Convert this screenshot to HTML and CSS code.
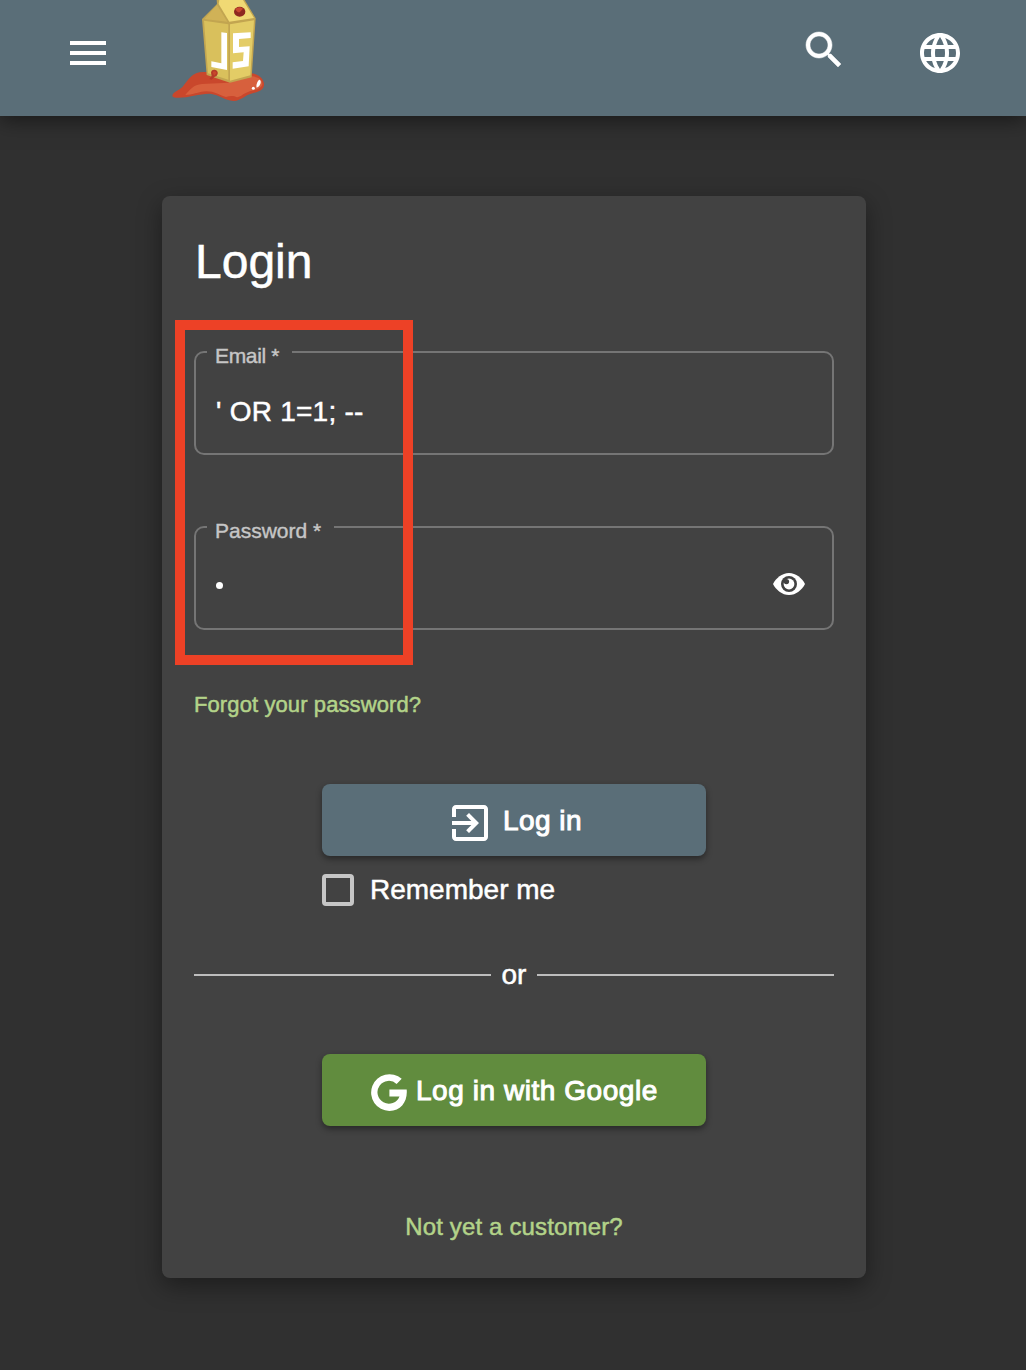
FILE: index.html
```html
<!DOCTYPE html>
<html lang="en">
<head>
<meta charset="utf-8">
<title>Login</title>
<link rel="stylesheet" href="styles.css">
</head>
<body>
<header class="toolbar">
  <svg class="icon menu" viewBox="0 0 24 24"><path d="M3 18h18v-2H3v2zm0-5h18v-2H3v2zm0-7v2h18V6H3z"/></svg>
  <svg class="logo" viewBox="0 0 360 360">
    <path fill="#c9472c" d="M37 287C38 275 57 272 68 260C85 239 96 216 130 216L270 219C298 221 313 238 312 254C311 272 291 276 273 281C256 285 245 301 221 303C192 300 180 285 151 281C119 280 84 294 53 293C43 293 37 291 37 287Z"/>
    <path fill="#d7603d" d="M76 285C91 267 100 255 126 252L205 248L276 229C298 232 308 240 307 254C302 269 278 270 264 276C249 281 242 291 231 292C222 287 210 287 198 291C172 284 166 274 139 274C113 276 97 285 76 285Z"/>
    <path fill="#c2a550" d="M170 0L171 12L126 57L140 225L210 248L275 232L287 55L254 0Z"/>
    <path fill="#d9c05c" d="M132 62L205 73L205 239L144 220Z"/>
    <path fill="#e3cc66" d="M210 73L282 61L271 226L210 242Z"/>
    <path fill="#f0d974" d="M178 0H249L282 54L208 65L176 12Z"/>
    <path fill="#d0b257" d="M171 15L202 65L133 57Z"/>
    <path fill="#fff" d="M184 97L201 99V210L154 201V184L184 190ZM219 100L272 97V114L237 117V141L269 139L266 199L218 206V187L249 183L251 157L219 160Z"/>
    <ellipse cx="239" cy="35" rx="17" ry="15" fill="#8e2820"/>
    <path fill="#c74730" d="M226 27Q237 17 249 26L239 37Q231 38 226 27Z"/>
    <path fill="#b43a28" d="M153 218Q154 208 164 209Q175 211 173 222Q171 229 163 231L155 239L148 237L155 228Z"/>
    <path fill="#c9472c" d="M158 216Q165 210 170 219L162 227Z"/>
    <path fill="#fff" d="M290 263C287 255 293 240 299 239C306 243 301 259 290 263Z"/>
    <circle cx="280" cy="265" r="4.5" fill="#fff"/>
  </svg>
  <svg class="icon search" viewBox="0 0 24 24"><path d="M15.5 14h-.79l-.28-.27C15.41 12.59 16 11.11 16 9.5 16 5.91 13.09 3 9.5 3S3 5.91 3 9.5 5.91 16 9.5 16c1.61 0 3.09-.59 4.23-1.57l.27.28v.79l5 4.99L20.49 19l-4.99-5zm-6 0C7.01 14 5 11.99 5 9.5S7.01 5 9.5 5 14 7.01 14 9.5 11.99 14 9.5 14z"/></svg>
  <svg class="icon language" viewBox="0 0 24 24"><path d="M11.99 2C6.47 2 2 6.48 2 12s4.47 10 9.99 10C17.52 22 22 17.52 22 12S17.52 2 11.99 2zm6.93 6h-2.95c-.32-1.25-.78-2.45-1.38-3.56 1.84.63 3.37 1.91 4.33 3.56zM12 4.04c.83 1.2 1.48 2.53 1.91 3.96h-3.82c.43-1.43 1.08-2.76 1.91-3.96zM4.26 14C4.1 13.36 4 12.69 4 12s.1-1.36.26-2h3.38c-.08.66-.14 1.32-.14 2s.06 1.34.14 2H4.26zm.82 2h2.95c.32 1.25.78 2.45 1.38 3.56-1.84-.63-3.37-1.9-4.33-3.56zm2.95-8H5.08c.96-1.66 2.49-2.93 4.33-3.56C8.81 5.55 8.35 6.75 8.03 8zM12 19.96c-.83-1.2-1.48-2.53-1.91-3.96h3.82c-.43 1.43-1.08 2.76-1.91 3.96zM14.34 14H9.66c-.09-.66-.16-1.32-.16-2s.07-1.35.16-2h4.68c.09.65.16 1.32.16 2s-.07 1.34-.16 2zm.25 5.56c.6-1.11 1.06-2.31 1.38-3.56h2.95c-.96 1.65-2.49 2.93-4.33 3.56zM16.36 14c.08-.66.14-1.32.14-2s-.06-1.34-.14-2h3.38c.16.64.26 1.31.26 2s-.1 1.36-.26 2h-3.38z"/></svg>
</header>
<main class="card">
  <h1 class="title">Login</h1>
  <fieldset class="field email">
    <legend class="label">Email *</legend>
    <div class="value">' OR 1=1; --</div>
  </fieldset>
  <fieldset class="field">
    <legend class="label">Password *</legend>
    <div class="value"><span class="bullet"></span>
      <svg class="eye" viewBox="0 0 32 22"><path fill="#fff" d="M0 11C3 5 9 0 16 0S29 5 32 11C29 17 23 22 16 22S3 17 0 11Z"/><circle cx="16" cy="11" r="8" fill="#424242"/><circle cx="16" cy="11" r="5.4" fill="#fff"/><circle cx="13.4" cy="8.6" r="2.7" fill="#424242"/></svg>
    </div>
  </fieldset>
  <a class="link forgot">Forgot your password?</a>
  <button class="button login">
    <svg class="icon" viewBox="0 0 24 24"><path d="M10.09 15.59L11.5 17l5-5-5-5-1.41 1.41L12.67 11H3v2h9.67l-2.58 2.59zM19 3H5c-1.11 0-2 .9-2 2v4h2V5h14v14H5v-4H3v4c0 1.1.89 2 2 2h14c1.1 0 2-.9 2-2V5c0-1.1-.9-2-2-2z"/></svg>
    <span>Log in</span>
  </button>
  <label class="remember"><span class="checkbox"></span>Remember me</label>
  <div class="divider"><span>or</span></div>
  <button class="button google">
    <svg class="g-icon" viewBox="0 0 36 37"><path d="M18.4 15.6H35.7C36.8 27.3 30.2 37 18.4 37A18.4 18.4 0 1 1 30.7 4.8L25.6 9.9A11.4 11.4 0 1 0 28.5 22.4H18.4Z"/></svg>
    <span>Log in with Google</span>
  </button>
  <a class="link customer">Not yet a customer?</a>
  <div class="highlight"></div>
</main>
</body>
</html>
```
FILE: styles.css
```css
* { box-sizing: border-box; }
body {
  margin: 0;
  height: 1370px;
  overflow: hidden;
  background: #303030;
  color: #fff;
  font-family: "Liberation Sans", Arial, sans-serif;
  -webkit-text-stroke: 0.5px;
}
.toolbar {
  display: flex;
  align-items: flex-start;
  height: 116px;
  padding: 0 62px 0 64px;
  background: #5a6e78;
  box-shadow: 0 4px 20px rgba(0, 0, 0, 0.5);
}
.icon { width: 48px; height: 48px; fill: #fff; flex: none; }
.menu { margin-top: 29px; }
.logo { width: 120px; height: 120px; margin: 0 0 -4px 48px; flex: none; }
.search { margin: 26px 68px 0 auto; stroke: #fff; stroke-width: 0.25; }
.language { margin-top: 29px; }
.card {
  position: relative;
  display: flex;
  flex-direction: column;
  width: 704px;
  height: 1082px;
  margin: 80px 0 0 162px;
  padding: 38px 32px 0;
  border-radius: 8px;
  background: #424242;
  box-shadow: 0 8px 24px rgba(0, 0, 0, 0.4);
}
.title { margin: 0 0 51px; padding-left: 1px; font-size: 48px; line-height: 56px; font-weight: 400; }
.field {
  width: 640px;
  height: 114px;
  min-width: 0;
  margin: 0 0 61px;
  padding: 0 27px 0 11px;
  border: 2px solid #757575;
  border-radius: 10px;
}
.label {
  height: 22px;
  padding: 0 13px 0 8px;
  color: #c6c6c6;
  font-size: 21px;
  line-height: 29px;
  -webkit-text-stroke: 0.4px;
}
.email .label { letter-spacing: -0.35px; }
.value {
  display: flex;
  align-items: center;
  justify-content: space-between;
  height: 32px;
  margin-top: 33px;
  padding-left: 9px;
  font-size: 28px;
  line-height: 32px;
  letter-spacing: 0.25px;
}
.bullet { width: 7px; height: 7px; margin: -3px 0 0; border-radius: 50%; background: #fff; }
.eye { width: 32px; height: 22px; margin-top: -6px; }
.link { color: #b3d389; }
.forgot { margin-top: 2px; font-size: 22px; line-height: 24px; letter-spacing: 0.1px; }
.button {
  display: flex;
  align-items: center;
  justify-content: flex-start;
  width: 384px;
  height: 72px;
  margin: 0 0 0 128px;
  padding: 0;
  border: 0;
  border-radius: 8px;
  color: #fff;
  font: 28px/32px "Liberation Sans", Arial, sans-serif;
  letter-spacing: 0.45px;
  -webkit-text-stroke: 1px #fff;
  box-shadow: 0 3px 6px rgba(0, 0, 0, 0.4);
}
.button span { padding-top: 2px; }
.login { margin-top: 67px; padding-left: 124px; background: #5a6e78; gap: 9px; }
.login .icon { margin-top: 6px; }
.google { padding-left: 49px; background: #618c3e; gap: 9px; letter-spacing: 0.55px; }
.g-icon { width: 36px; height: 37px; margin-top: 5px; fill: #fff; }
.remember {
  display: flex;
  align-items: center;
  gap: 16px;
  height: 32px;
  margin: 18px 0 0 128px;
  font-size: 28px;
  line-height: 34px;
}
.checkbox { width: 32px; height: 32px; border: 4px solid #c6c6c6; border-radius: 4px; }
.divider {
  display: flex;
  align-items: center;
  gap: 11px;
  margin: 53px 0 63px;
  font-size: 28px;
  line-height: 32px;
}
.divider::before, .divider::after { content: ""; flex: 1; height: 2px; background: #bdbdbd; }
.customer { margin-top: 87px; text-align: center; font-size: 24px; line-height: 28px; letter-spacing: 0.15px; }
.highlight {
  position: absolute;
  left: 13px;
  top: 124px;
  width: 238px;
  height: 345px;
  border: 10px solid #ed4126;
}
```
